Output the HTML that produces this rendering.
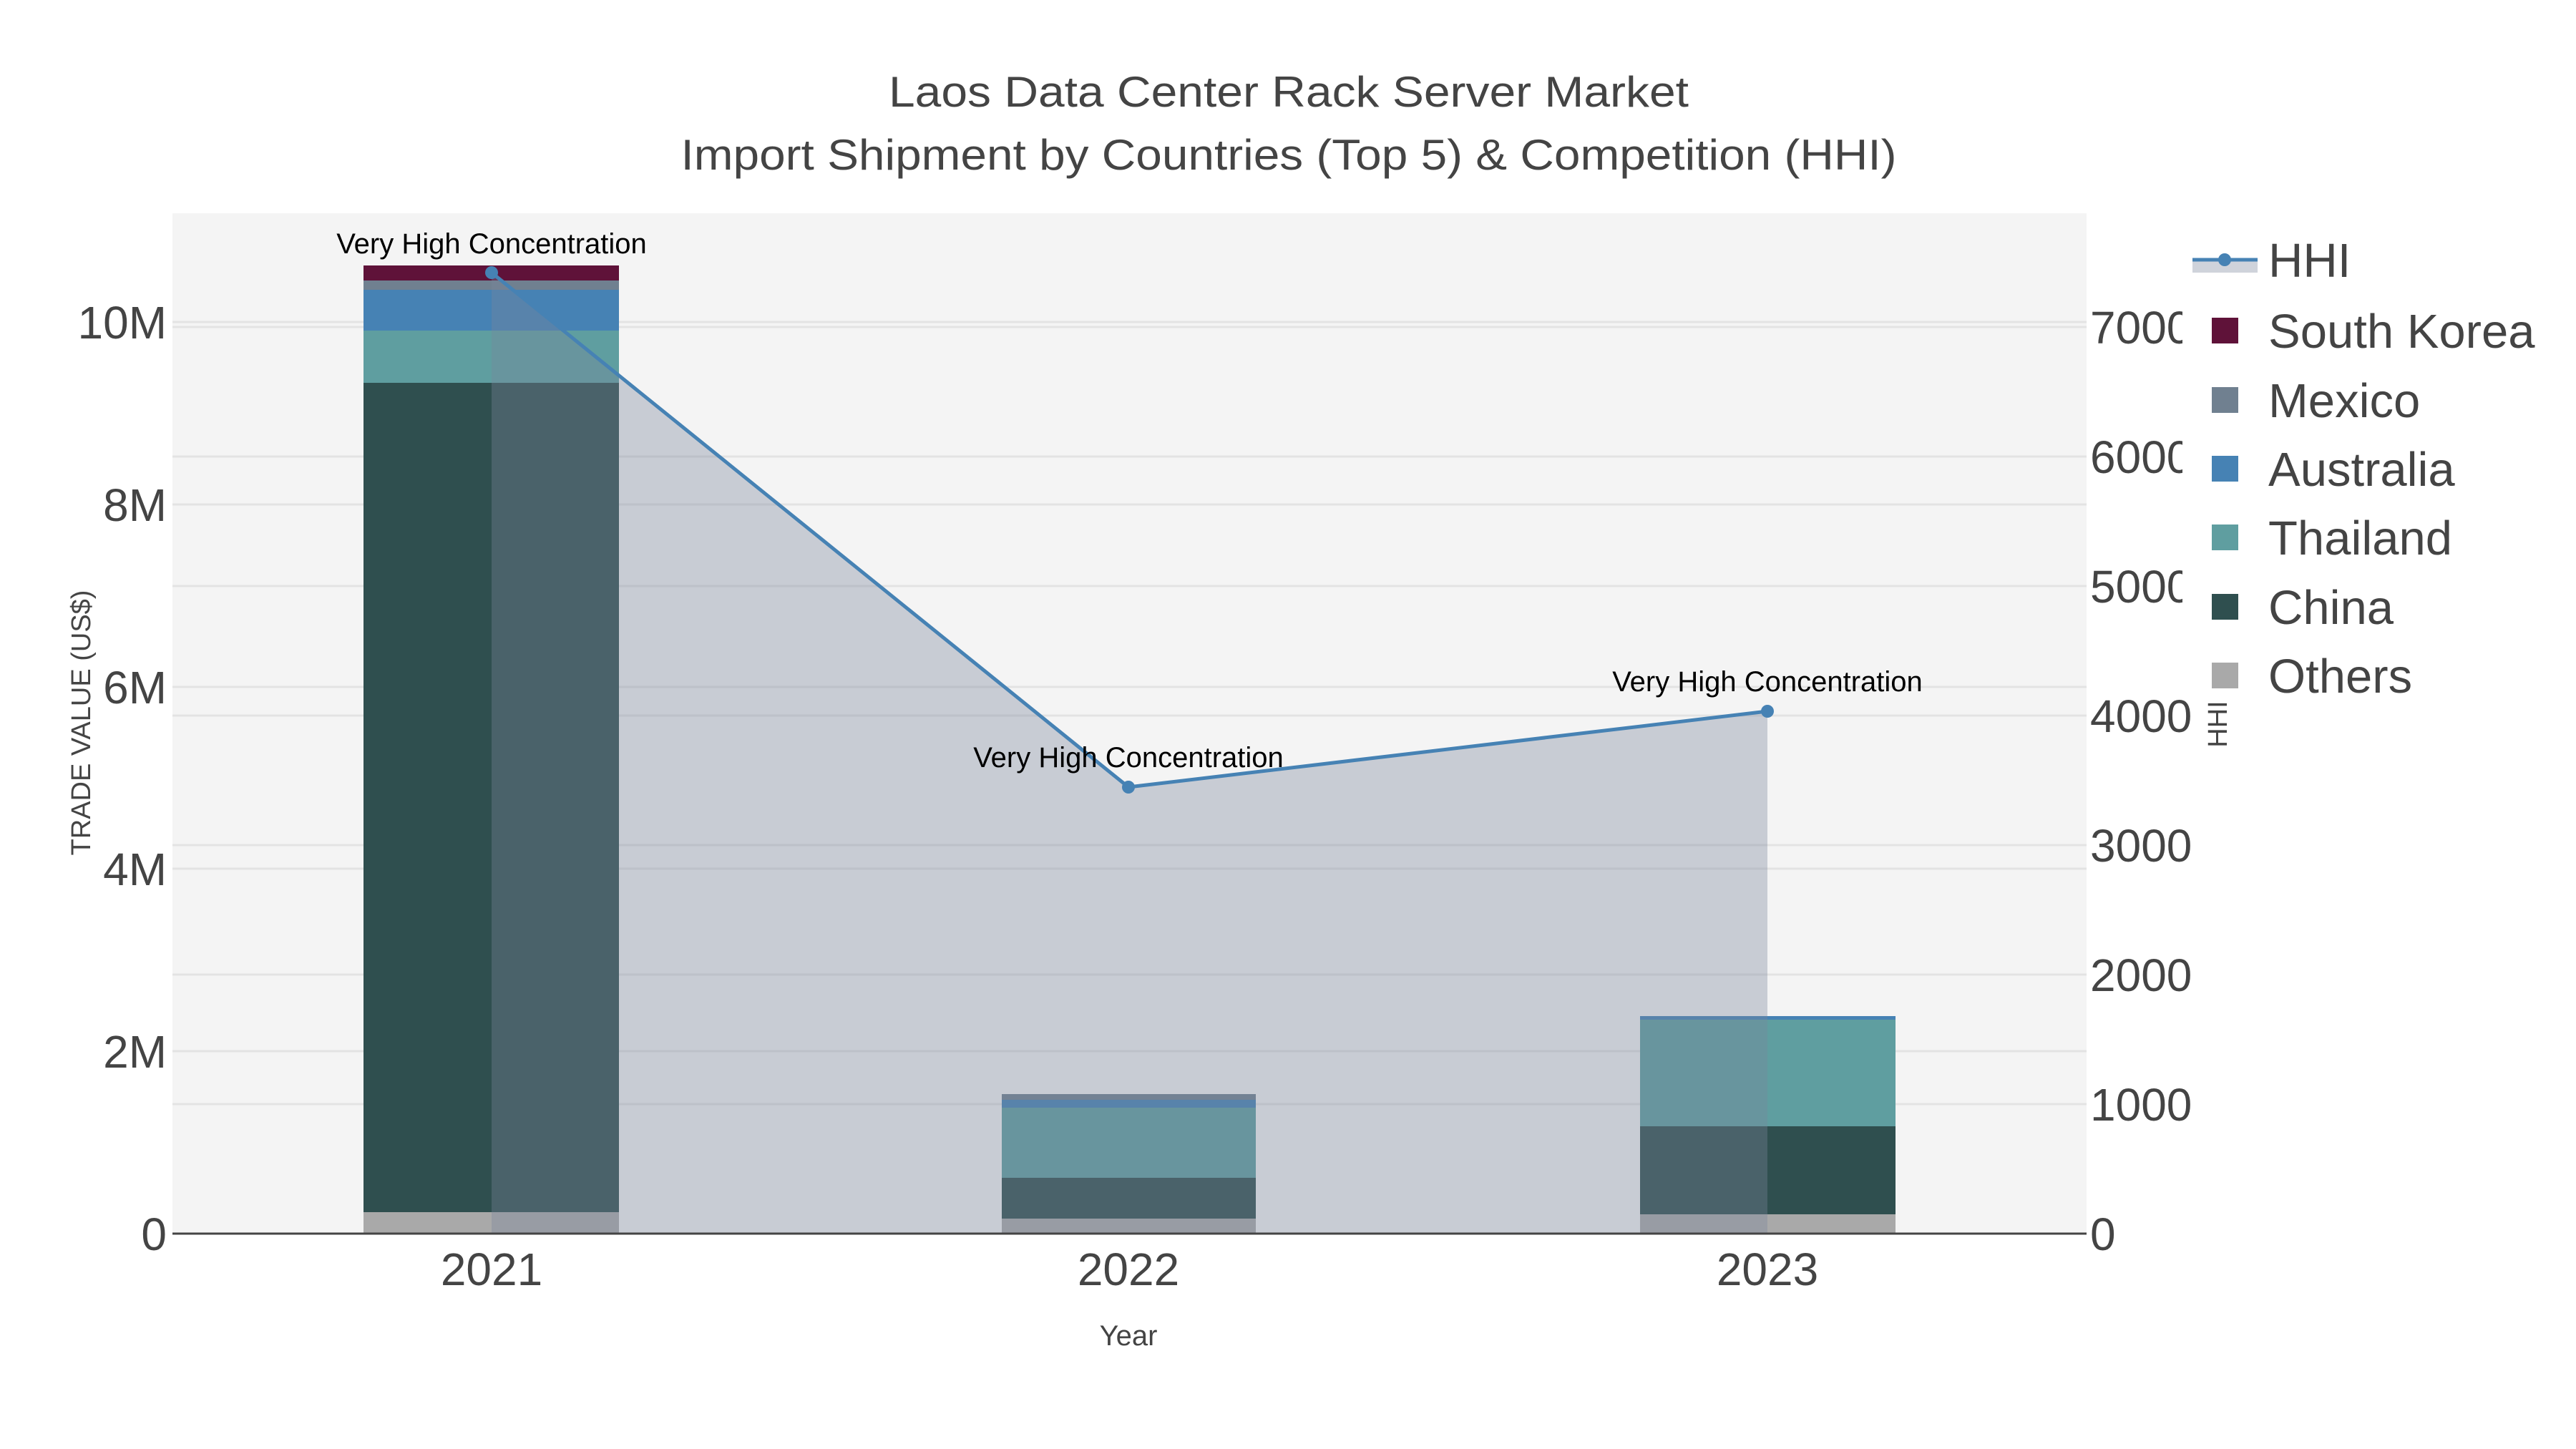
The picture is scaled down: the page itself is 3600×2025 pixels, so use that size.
<!DOCTYPE html>
<html><head><meta charset="utf-8"><style>
html,body{margin:0;padding:0;background:#fff;}
svg{display:block;}
text{font-family:"Liberation Sans",sans-serif;fill:#444;}
</style></head><body>
<svg width="3600" height="2025" viewBox="0 0 3600 2025" xmlns="http://www.w3.org/2000/svg">
<rect x="0" y="0" width="3600" height="2025" fill="#fff"/>
<rect x="241" y="298" width="2675" height="1426" fill="#f4f4f4"/>
<g stroke="#e3e3e3" stroke-width="3">
<line x1="241" x2="2916" y1="1469" y2="1469"/><line x1="241" x2="2916" y1="1214" y2="1214"/>
<line x1="241" x2="2916" y1="960" y2="960"/><line x1="241" x2="2916" y1="705" y2="705"/>
<line x1="241" x2="2916" y1="450" y2="450"/>
<line x1="241" x2="2916" y1="1543" y2="1543"/><line x1="241" x2="2916" y1="1362" y2="1362"/>
<line x1="241" x2="2916" y1="1181" y2="1181"/><line x1="241" x2="2916" y1="1000" y2="1000"/>
<line x1="241" x2="2916" y1="819" y2="819"/><line x1="241" x2="2916" y1="638" y2="638"/>
<line x1="241" x2="2916" y1="457" y2="457"/>
</g>
<rect x="508" y="371" width="357" height="21" fill="#5f1239"/>
<rect x="508" y="392" width="357" height="13" fill="#708090"/>
<rect x="508" y="405" width="357" height="57" fill="#4682b4"/>
<rect x="508" y="462" width="357" height="73" fill="#5f9ea0"/>
<rect x="508" y="535" width="357" height="1159" fill="#2f4f4f"/>
<rect x="508" y="1694" width="357" height="30" fill="#a9a9a9"/>
<rect x="1400" y="1529" width="355" height="8" fill="#708090"/>
<rect x="1400" y="1537" width="355" height="11" fill="#4682b4"/>
<rect x="1400" y="1548" width="355" height="98" fill="#5f9ea0"/>
<rect x="1400" y="1646" width="355" height="57" fill="#2f4f4f"/>
<rect x="1400" y="1703" width="355" height="21" fill="#a9a9a9"/>
<rect x="2292" y="1420" width="357" height="5" fill="#4682b4"/>
<rect x="2292" y="1425" width="357" height="149" fill="#5f9ea0"/>
<rect x="2292" y="1574" width="357" height="123" fill="#2f4f4f"/>
<rect x="2292" y="1697" width="357" height="27" fill="#a9a9a9"/>
<polygon points="687,381 1577,1100 2470,994 2470,1724 687,1724" fill="rgb(122,133,155)" fill-opacity="0.36"/>
<line x1="241" x2="2916" y1="1724" y2="1724" stroke="#444" stroke-width="3"/>
<polyline points="687,381 1577,1100 2470,994" fill="none" stroke="#4682b4" stroke-width="5"/>
<circle cx="687" cy="381" r="9" fill="#4682b4"/><circle cx="1577" cy="1100" r="9" fill="#4682b4"/><circle cx="2470" cy="994" r="9" fill="#4682b4"/>
<g font-size="40" text-anchor="middle">
<text x="687" y="354" style="fill:#000">Very High Concentration</text>
<text x="1577" y="1072" style="fill:#000">Very High Concentration</text>
<text x="2470" y="966" style="fill:#000">Very High Concentration</text>
</g>
<g font-size="64" text-anchor="end">
<text x="233" y="1747">0</text><text x="233" y="1492">2M</text><text x="233" y="1237">4M</text>
<text x="233" y="983">6M</text><text x="233" y="728">8M</text><text x="233" y="473">10M</text>
</g>
<g font-size="64">
<text x="2921" y="1747">0</text><text x="2921" y="1566">1000</text><text x="2921" y="1385">2000</text>
<text x="2921" y="1204">3000</text><text x="2921" y="1023">4000</text><text x="2921" y="842">5000</text>
<text x="2921" y="661">6000</text><text x="2921" y="480">7000</text>
</g>
<rect x="3050" y="300" width="550" height="660" fill="#fff"/>
<rect x="3066" y="960" width="534" height="80" fill="#fff"/>
<g font-size="64" text-anchor="middle">
<text x="687" y="1796">2021</text><text x="1577" y="1796">2022</text><text x="2470" y="1796">2023</text>
</g>
<text x="1577" y="1880" font-size="40" text-anchor="middle">Year</text>
<text transform="translate(126,1010) rotate(-90)" font-size="38" text-anchor="middle">TRADE VALUE (US$)</text>
<text transform="translate(3112,1012) rotate(-90)" font-size="38" text-anchor="middle">HHI</text>
<text x="1801" y="149" font-size="60" text-anchor="middle" textLength="1118" lengthAdjust="spacingAndGlyphs">Laos Data Center Rack Server Market</text>
<text x="1801" y="237" font-size="60" text-anchor="middle" textLength="1699" lengthAdjust="spacingAndGlyphs">Import Shipment by Countries (Top 5) &amp; Competition (HHI)</text>
<rect x="3064" y="363" width="91" height="18" fill="rgb(122,133,155)" fill-opacity="0.36"/>
<line x1="3064" x2="3155" y1="363" y2="363" stroke="#4682b4" stroke-width="5"/>
<circle cx="3109" cy="363" r="9" fill="#4682b4"/>
<rect x="3091" y="444" width="37" height="36" fill="#5f1239"/>
<rect x="3091" y="541" width="37" height="36" fill="#708090"/>
<rect x="3091" y="637" width="37" height="36" fill="#4682b4"/>
<rect x="3091" y="733" width="37" height="36" fill="#5f9ea0"/>
<rect x="3091" y="830" width="37" height="36" fill="#2f4f4f"/>
<rect x="3091" y="926" width="37" height="36" fill="#a9a9a9"/>
<g font-size="67">
<text x="3170" y="387">HHI</text>
<text x="3170" y="486">South Korea</text>
<text x="3170" y="583">Mexico</text>
<text x="3170" y="679">Australia</text>
<text x="3170" y="775">Thailand</text>
<text x="3170" y="872">China</text>
<text x="3170" y="968">Others</text>
</g>
</svg>
</body></html>
